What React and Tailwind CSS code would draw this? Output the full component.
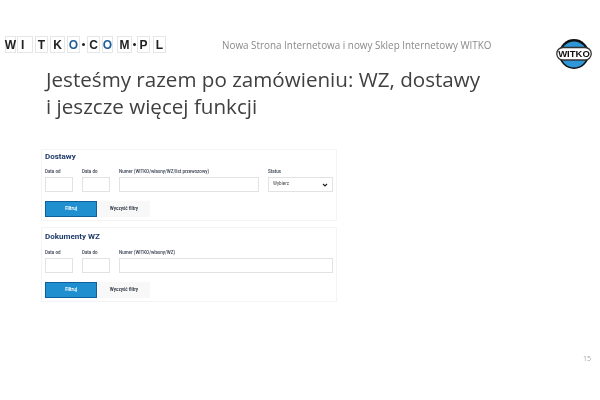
const font = { fontFamily: '"Open Sans", sans-serif' };

const tiles = [
  { c: "W", w: 11 }, { c: "I", w: 16, ml: 1, left: true }, { c: "T", w: 13, ml: 2 }, { c: "K", w: 15, ml: 2 },
  { c: "O", w: 13, blue: true, ml: 2 }, { dot: true, ml: 2 }, { c: "C", w: 13, ml: 2 }, { c: "O", w: 11, blue: true, ml: 2 },
  { c: "M", w: 15, ml: 4 }, { dot: true, ml: 1 }, { c: "P", w: 13, ml: 1 }, { c: "L", w: 13, ml: 3 },
];

function Tile({ c, blue, w, ml, left }) {
  return (
    <div
      className={`h-[17px] border border-[#e6e6e6] bg-white flex items-center ${left ? "justify-start pl-[3px]" : "justify-center"}`}
      style={{ width: w, marginLeft: ml || 0 }}
    >
      <span className={`font-['Liberation_Sans'] font-bold text-[12px] leading-none ${blue ? "text-[#1f5f99]" : "text-[#222222]"}`}>{c}</span>
    </div>
  );
}

function Logo() {
  return (
    <div className="flex items-center">
      {tiles.map((t, i) =>
        t.dot ? (
          <div key={i} className="w-[3px] h-[3px] bg-[#222222] rounded-full" style={{ marginLeft: t.ml }} />
        ) : (
          <Tile key={i} {...t} />
        )
      )}
    </div>
  );
}

function WitkoMark() {
  return (
    <svg width="36" height="32" viewBox="0 0 36 32">
      <circle cx="18" cy="16" r="15" fill="#111111" />
      <circle cx="18" cy="16.5" r="13" fill="#2f97d8" />
      <rect x="0.75" y="9.5" width="34.5" height="12.5" rx="6.2" fill="#ffffff" stroke="#333333" strokeWidth="1.3" />
      <text x="18" y="19.4" textAnchor="middle" fontFamily="Liberation Sans" fontWeight="700" fontSize="9.5" fill="#111111">WITKO</text>
    </svg>
  );
}

function Field({ label, w, grow, children }) {
  return (
    <div className={grow ? "flex-1" : ""} style={w ? { width: w } : undefined}>
      <div className="text-[4.5px] leading-[6px] font-semibold text-[#444c5c] font-['Roboto'] mb-[2px]">{label}</div>
      <div className="h-[15px] border border-[#e2e2e2] bg-white flex items-center justify-between px-[4px]">{children}</div>
    </div>
  );
}

function Buttons() {
  return (
    <div className="flex items-center mt-[9px] gap-[1px]">
      <div className="w-[52px] h-[16px] bg-[#1f8fd0] border border-[#0f5f9c] flex items-center justify-center text-white text-[4.5px] font-bold font-['Roboto']">Filtruj</div>
      <div className="w-[52px] h-[16px] bg-[#f8f8f8] flex items-center justify-center text-[#333a48] text-[4.5px] font-bold font-['Roboto']">Wyczyść filtry</div>
    </div>
  );
}

function Panel({ title, children, className, titleClass }) {
  return (
    <div className={`w-[296px] border border-[#f4f4f4] px-[3px] ${className || ""}`}>
      <div className={`text-[8px] leading-[12px] font-bold text-[#1f3a68] font-['Roboto'] ${titleClass}`}>{title}</div>
      {children}
    </div>
  );
}

export default function App() {
  return (
    <div className="w-[600px] h-[400px] bg-white overflow-hidden blur-[0.35px]" style={font}>
      <div className="flex items-start h-[66px] pl-[5px] pr-[8px] pt-[36px]">
        <Logo />
        <div className="flex-1 text-[9.9px] leading-[14px] text-[#8a8a8a] pl-[56px] pt-[2px]">Nowa Strona Internetowa i nowy Sklep Internetowy WITKO</div>
        <div className="mt-[2px]"><WitkoMark /></div>
      </div>
      <div className="pl-[46px] text-[20.6px] leading-[27px] text-[#404040]">
        Jesteśmy razem po zamówieniu: WZ, dostawy<br />i jeszcze więcej funkcji
      </div>
      <div className="pl-[41px] pt-[29px]">
        <Panel title="Dostawy" titleClass="mb-[6px]" className="pt-[1px] pb-[3px]">
          <div className="flex gap-[9px]">
            <Field label="Data od" w="28px" />
            <Field label="Data do" w="28px" />
            <Field label="Numer (WITKO/własny/WZ/list przewozowy)" w="140px" />
            <Field label="Status" w="65px">
              <span className="text-[4.5px] text-[#444444] font-['Roboto']">Wybierz</span>
              <svg width="6" height="4" viewBox="0 0 6 4"><path d="M1 1l2 2 2-2" fill="none" stroke="#222222" strokeWidth="1.2" /></svg>
            </Field>
          </div>
          <Buttons />
        </Panel>
        <Panel title="Dokumenty WZ" titleClass="mb-[7px]" className="mt-[6px] pt-[3px] pb-[3px]">
          <div className="flex gap-[9px]">
            <Field label="Data od" w="28px" />
            <Field label="Data do" w="28px" />
            <Field label="Numer (WITKO/własny/WZ)" grow />
          </div>
          <Buttons />
        </Panel>
      </div>
      <div className="text-right pr-[9px] pt-[52px] text-[7px] leading-[10px] text-[#a8a8a8]">15</div>
    </div>
  );
}
